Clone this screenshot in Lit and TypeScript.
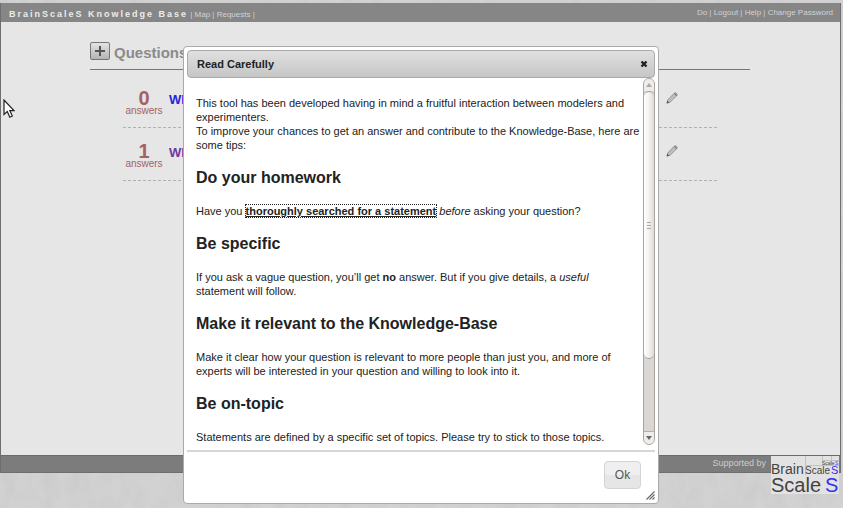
import { LitElement, html, css } from "lit";
import { customElement, property } from "lit/decorators.js";

@customElement("question-row")
class QuestionRow extends LitElement {
  @property({ type: Number }) answers = 0;
  @property() heading = "";
  @property({ type: Boolean }) visited = false;

  static styles = css`
    :host {
      display: flex;
      align-items: flex-start;
      box-sizing: border-box;
      height: 53px;
      padding-top: 15px;
      border-bottom: 1px dashed #b0b0b0;
      color: #a56262;
    }
    .count {
      width: 42px;
      text-align: center;
      font-size: 10px;
      line-height: 10px;
    }
    .number {
      display: block;
      font-size: 20px;
      line-height: 16px;
      font-weight: bold;
    }
    .title {
      flex: 1;
      margin-left: 4px;
      font-size: 13px;
      line-height: 20px;
      font-weight: bold;
      color: #2b22dd;
      text-decoration: none;
    }
    .title.visited {
      color: #6a3a9c;
    }
    .edit {
      width: 12px;
      height: 12px;
      margin: 2px 39px 0 0;
      padding: 0;
      border: 0;
      background: none;
    }
    svg {
      display: block;
    }
  `;

  render() {
    return html`
      <div class="count"><span class="number">${this.answers}</span>answers</div>
      <a class="title ${this.visited ? "visited" : ""}" href="#">${this.heading}</a>
      <button class="edit" aria-label="Edit">
        <svg width="12" height="12" viewBox="0 0 12 12">
          <path d="M1 11 L1.8 8 L8 1.4 Q9.4 .2 10.6 1.4 Q11.6 2.6 10.6 3.8 L4.2 10 Z" fill="#c8c8c8" stroke="#858585" stroke-width=".9" />
          <path d="M3 8.6 L8.6 3" stroke="#aaa" stroke-width=".9" />
          <path d="M.6 11.4 L1.4 8.8 L3.4 10.7 Z" fill="#555" />
          <path d="M8.4 1.4 L10.8 3.8" stroke="#777" stroke-width="1.2" />
        </svg>
      </button>
    `;
  }
}

@customElement("tips-dialog")
class TipsDialog extends LitElement {
  static styles = css`
    :host {
      display: block;
      box-sizing: border-box;
      width: 476px;
      max-width: 100%;
      padding: 3px;
      border: 1px solid #aaa;
      border-radius: 4px;
      background: #fff;
      color: #222;
      font-family: "Liberation Sans", Arial, sans-serif;
      font-size: 11px;
      line-height: 14px;
    }
    .bar {
      display: flex;
      align-items: center;
      justify-content: space-between;
      box-sizing: border-box;
      height: 28px;
      padding: 0 6px 0 9px;
      border: 1px solid #aaa;
      border-radius: 4px;
      background: linear-gradient(#e0e0e0, #c6c6c6);
    }
    .bar h1 {
      margin: 0;
      font-size: 11px;
    }
    .close {
      display: block;
      padding: 0;
      border: 0;
      background: none;
      width: 8px;
      height: 8px;
    }
    svg {
      display: block;
    }
    .body {
      display: flex;
      height: 367px;
    }
    .text {
      flex: 1;
      padding: 18px 0 0 9px;
      overflow: hidden;
      white-space: nowrap;
    }
    p {
      margin: 0;
    }
    h2 {
      margin: 15px 0;
      font-size: 16px;
      line-height: 22px;
    }
    .text a {
      color: #222;
      font-weight: bold;
      outline: 1px dotted #222;
    }
    .scroll {
      display: flex;
      flex-direction: column;
      box-sizing: border-box;
      width: 12px;
      border: 1px solid #aaa4a0;
      border-radius: 6px;
      background: #d9d6d3;
      overflow: hidden;
    }
    .arrow {
      display: grid;
      place-items: center;
      height: 12px;
      background: #efedeb;
    }
    .thumb {
      display: grid;
      place-items: center;
      box-sizing: border-box;
      height: 268px;
      border: solid #a39d99;
      border-width: 1px 0;
      border-radius: 6px;
      background: linear-gradient(90deg, #fff, #efedec 60%, #dedbd9);
    }
    .track {
      flex: 1;
    }
    .low {
      border-top: 1px solid #b5b0ac;
    }
    .actions {
      display: flex;
      justify-content: flex-end;
      box-sizing: border-box;
      height: 50px;
      margin-top: 5px;
      padding: 9px 14px 0 0;
      border-top: 2px solid #d6d6d6;
      position: relative;
    }
    .ok {
      box-sizing: border-box;
      width: 37px;
      height: 28px;
      padding: 0;
      border: 1px solid #d3d3d3;
      border-radius: 4px;
      background: linear-gradient(#efefef 50%, #e6e6e6 50%);
      color: #555;
      font: 12px "Liberation Sans", Arial, sans-serif;
    }
    .grip {
      position: absolute;
      right: 0;
      bottom: 0;
    }
  `;

  render() {
    return html`
      <div class="bar">
        <h1>Read Carefully</h1>
        <button class="close" aria-label="Close">
          <svg width="8" height="8" viewBox="0 0 8 8"><path d="M1.5 1.5 L6.5 6.5 M6.5 1.5 L1.5 6.5" stroke="#222" stroke-width="2.4" /></svg>
        </button>
      </div>
      <div class="body">
        <div class="text">
          <p>
            This tool has been developed having in mind a fruitful interaction between modelers and<br />
            experimenters.<br />
            To improve your chances to get an answer and contribute to the Knowledge-Base, here are<br />
            some tips:
          </p>
          <h2>Do your homework</h2>
          <p>Have you <a href="#">thoroughly searched for a statement</a> <em>before</em> asking your question?</p>
          <h2>Be specific</h2>
          <p>If you ask a vague question, you’ll get <b>no</b> answer. But if you give details, a <em>useful</em><br />statement will follow.</p>
          <h2>Make it relevant to the Knowledge-Base</h2>
          <p>Make it clear how your question is relevant to more people than just you, and more of<br />experts will be interested in your question and willing to look into it.</p>
          <h2>Be on-topic</h2>
          <p>Statements are defined by a specific set of topics. Please try to stick to those topics.</p>
        </div>
        <div class="scroll">
          <div class="arrow"><svg width="6" height="4"><path d="M0 4 L3 0 L6 4Z" fill="#aaa" /></svg></div>
          <div class="thumb"><svg width="4" height="8"><path d="M0 1.5H4M0 4.5H4M0 7.5H4" stroke="#aaa" /></svg></div>
          <div class="track"></div>
          <div class="arrow low"><svg width="6" height="4"><path d="M0 0 L6 0 L3 4Z" fill="#666" /></svg></div>
        </div>
      </div>
      <div class="actions">
        <button class="ok">Ok</button>
        <svg class="grip" width="9" height="9" viewBox="0 0 9 9"><path d="M.5 8.5 L8.5 .5 M3.5 8.5 L8.5 3.5 M6.5 8.5 L8.5 6.5" stroke="#666" stroke-width="1.1" /></svg>
      </div>
    `;
  }
}

@customElement("app-root")
class AppRoot extends LitElement {
  static styles = css`
    :host {
      display: flex;
      flex-direction: column;
      box-sizing: border-box;
      min-height: 100vh;
      padding: 3px 2px 35px 0;
      position: relative;
      background: #d2d2d2;
      font-family: "Liberation Sans Narrow", "Arial Narrow", "Liberation Sans", sans-serif;
      font-size: 9px;
      line-height: 14px;
    }
    .texture {
      position: absolute;
      inset: 0;
      width: 100%;
      height: 100%;
    }
    .frame {
      flex: 1;
      display: flex;
      flex-direction: column;
      position: relative;
      border: 1px solid #6e6e6e;
      border-top: 0;
      background: #e6e6e6;
    }
    header {
      display: flex;
      justify-content: space-between;
      box-sizing: border-box;
      height: 19px;
      padding: 3px 7px 0 8px;
      background: #868686;
      color: #d2d2d2;
      font-size: 8px;
    }
    header a {
      color: #d2d2d2;
      text-decoration: none;
    }
    .left {
      padding-top: 1px;
    }
    .brand {
      color: #ececec;
      font-size: 9px;
      font-weight: bold;
      letter-spacing: 2px;
    }
    main {
      flex: 1;
      padding: 20px 90px 0 89px;
    }
    .heading {
      display: flex;
      gap: 4px;
      box-sizing: border-box;
      height: 28px;
      border-bottom: 1px solid #777;
      color: #8b8b8b;
    }
    h1 {
      margin: 0;
      font-size: 15px;
      line-height: 22px;
    }
    .add {
      box-sizing: border-box;
      width: 20px;
      height: 18px;
      margin: 0;
      padding: 0;
      display: grid;
      place-items: center;
      border: 1px solid #777;
      border-radius: 2px;
      background: linear-gradient(#e4e4e4, #b4b4b4);
    }
    .list {
      padding: 5px 33px 0;
    }
    footer {
      display: flex;
      justify-content: flex-end;
      gap: 5px;
      height: 16px;
      padding-right: 1px;
      border-top: 1px solid #6a6a6a;
      background: #7c7c7c;
      color: #ccc;
    }
    .logo {
      display: block;
      width: 68px;
      height: 38px;
      overflow: visible;
      z-index: 1;
    }
    tips-dialog {
      position: absolute;
      top: 46px;
      left: 0;
      right: 1px;
      margin: 0 auto;
    }
    .cursor {
      position: absolute;
      left: 3px;
      top: 99px;
    }
  `;

  render() {
    return html`
      <svg class="texture" aria-hidden="true">
        <filter id="grain" x="0" y="0" width="100%" height="100%">
          <feTurbulence type="fractalNoise" baseFrequency=".07 .04" numOctaves="3" seed="4" />
          <feColorMatrix values="0 0 0 0 .5  0 0 0 0 .5  0 0 0 0 .5  .5 0 0 0 -.16" />
        </filter>
        <rect width="100%" height="100%" filter="url(#grain)" />
      </svg>
      <div class="frame">
        <header>
          <div class="left"><span class="brand">BrainScaleS Knowledge Base</span> | <a href="#">Map</a> | <a href="#">Requests</a> |</div>
          <nav><a href="#">Do</a> | <a href="#">Logout</a> | <a href="#">Help</a> | <a href="#">Change Password</a></nav>
        </header>
        <main>
          <div class="heading">
            <button class="add" aria-label="Add question">
              <svg width="10" height="10"><path d="M5 0V10M0 5H10" stroke="#555" stroke-width="2" /></svg>
            </button>
            <h1>Questions</h1>
          </div>
          <div class="list">
            <question-row answers="0" heading="Wh"></question-row>
            <question-row answers="1" heading="Wh" visited></question-row>
          </div>
        </main>
        <footer>
          <span>Supported by</span>
          <svg class="logo" viewBox="0 0 68 38" font-family="Liberation Sans, sans-serif" fill="#444">
            <rect width="68" height="38" fill="#e2e2e2" />
            <path d="M34.5 0V19M34 9.5H68M51.5 0V10M60.500 0V9M51 4.500H68" stroke="#c2c2c2" fill="none" />
            <text x="0" y="18" font-size="14">Brain</text>
            <text x="34" y="18" font-size="10">Scale</text>
            <text x="51" y="9" font-size="5">Scale</text>
            <text x="60" y="18" font-size="11" fill="#33e">S</text>
            <text x="64" y="9" font-size="5" fill="#33e">S</text>
            <text x="0" y="36" font-size="20">Scale</text>
            <text x="54" y="36" font-size="20" fill="#33e">S</text>
          </svg>
        </footer>
      </div>
      <tips-dialog role="dialog" aria-label="Read Carefully"></tips-dialog>
      <svg class="cursor" width="12" height="20" viewBox="0 0 12 20" aria-hidden="true">
        <path d="M1 1 V15.500 L4.300 12.500 L6.800 18.200 L9.300 17 L6.800 11.600 H11 Z" fill="#fff" stroke="#222" stroke-width="1.200" />
      </svg>
    `;
  }
}
